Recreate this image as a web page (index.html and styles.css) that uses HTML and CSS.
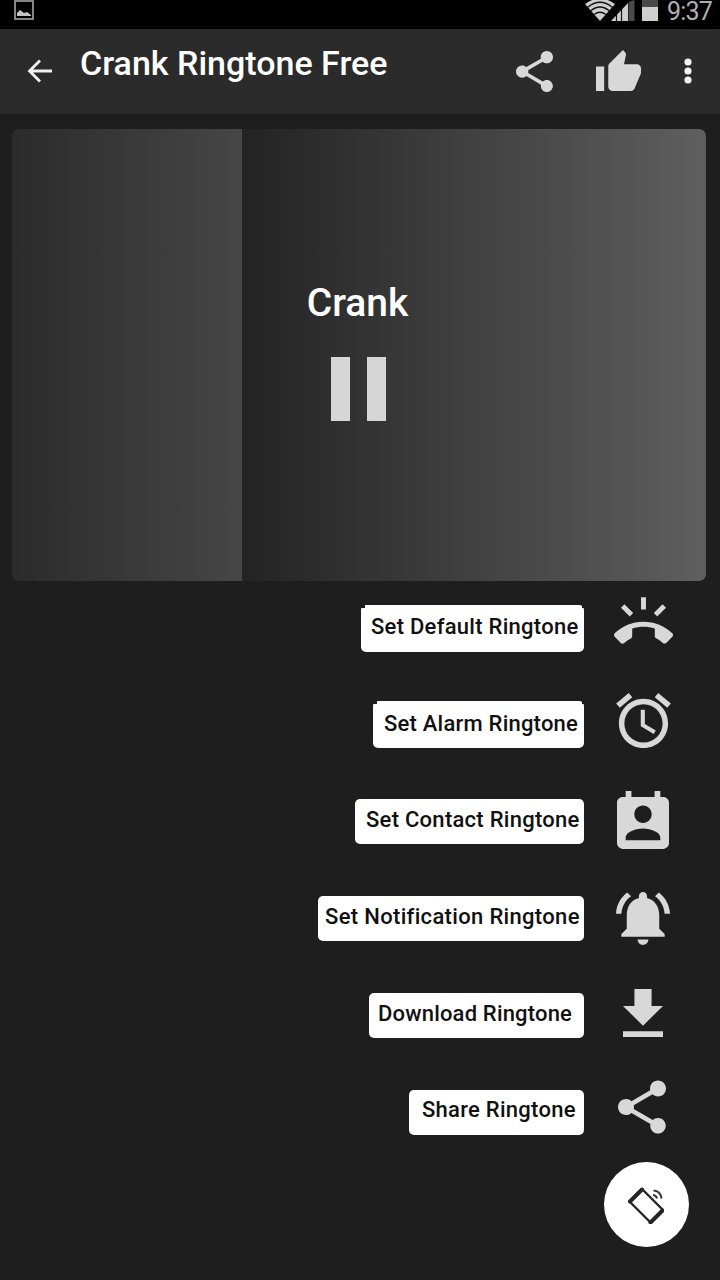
FILE: index.html
```
<!DOCTYPE html>
<html lang="en">
<head>
    <meta charset="UTF-8">
    <meta name="viewport" content="width=device-width, initial-scale=1.0">
    <title>Crank Ringtone Free</title>
    <link rel="stylesheet" href="styles.css">
</head>
<body>

    <div class="status-bar">
        <svg class="picture" viewBox="0 0 20 20" width="20" height="20">
            <rect x="1" y="1" width="18" height="18" fill="none" stroke="#a8a8a8" stroke-width="1.6"/>
            <path d="M3 16v-3l3-3 4 3 3-1 4 3v1z" fill="#c4c4c4"/>
        </svg>
        <div class="status-icons">
            <svg class="wifi" viewBox="0 0 30 21" width="30" height="21">
                <path d="M0 4Q15-7 30 4L15 21z" fill="#cdcdcd"/>
                <path d="M2.5 7.5Q15-3 27.5 7.5M5.5 11Q15 3 24.5 11M9 14.5Q15 10 21 14.5" fill="none" stroke="#111" stroke-width="1.3"/>
            </svg>
            <svg class="signal" viewBox="0 0 24 21" width="24" height="21">
                <path d="M0 21L17 3v18z" fill="#cdcdcd"/>
                <path d="M17.5 2L23.500 0v21h-6z" fill="#4a4a4a"/>
                <path d="M5.5 14v7M10.5 9v12" stroke="#111" stroke-width="1.2"/>
            </svg>
            <div class="battery"></div>
            <span class="time">9:37</span>
        </div>
    </div>

    <header class="app-bar">
        <svg class="back" viewBox="0 0 25 24" width="25" height="24">
            <path d="M13 1.5L2.5 12 13 22.5M2.5 12H25" fill="none" stroke="#f2f2f2" stroke-width="2.8"/>
        </svg>
        <h1>Crank Ringtone Free</h1>
        <svg class="share" viewBox="3 2 18 19.92" width="37" height="41">
            <path d="M18 16.08c-.76 0-1.44.3-1.96.77L8.91 12.7c.05-.23.09-.46.09-.7s-.04-.47-.09-.7l7.05-4.11c.54.5 1.25.81 2.04.81 1.66 0 3-1.34 3-3s-1.34-3-3-3-3 1.34-3 3c0 .24.04.47.09.7L8.04 9.81C7.5 9.31 6.79 9 6 9c-1.66 0-3 1.34-3 3s1.34 3 3 3c.79 0 1.5-.31 2.04-.81l7.12 4.16c-.05.21-.08.43-.08.65 0 1.61 1.31 2.92 2.92 2.92s2.92-1.31 2.92-2.92-1.31-2.92-2.92-2.92z"/>
        </svg>
        <svg class="like" viewBox="1 1 22 20" width="45" height="41">
            <path d="M1 21h4V9H1v12zm22-11c0-1.1-.9-2-2-2h-6.31l.95-4.57.03-.32c0-.41-.17-.79-.44-1.06L14.17 1 7.59 7.59C7.22 7.95 7 8.45 7 9v10c0 1.1.9 2 2 2h9c.83 0 1.54-.5 1.84-1.22l3.02-7.05c.09-.23.14-.47.14-.73v-2z"/>
        </svg>
        <svg class="more" viewBox="0 0 8 26" width="8" height="26">
            <circle cx="4" cy="4" r="3.6"/>
            <circle cx="4" cy="13" r="3.6"/>
            <circle cx="4" cy="22" r="3.6"/>
        </svg>
    </header>

    <main>
        <section class="player">
            <div class="progress"></div>
            <div class="track">
                <h2>Crank</h2>
                <div class="pause"><span></span><span></span></div>
            </div>
        </section>

        <ul class="actions">
            <li>
                <span class="label default">Set Default Ringtone</span>
                <span class="icon ring-icon">
                    <svg viewBox="0 2 24 18.9" width="59" height="47">
                        <path d="M23.71 16.67C20.66 13.78 16.54 12 12 12 7.46 12 3.34 13.78.29 16.67c-.18.18-.29.43-.29.71 0 .28.11.53.29.71l2.48 2.48c.18.18.43.29.71.29.27 0 .52-.11.7-.28.79-.74 1.69-1.36 2.66-1.85.33-.16.56-.5.56-.9v-3.1c1.45-.48 3-.73 4.6-.73s3.15.25 4.6.72v3.1c0 .39.23.74.56.9.98.49 1.87 1.12 2.67 1.85.18.18.43.28.7.28.28 0 .53-.11.71-.29l2.48-2.48c.18-.18.29-.43.29-.71s-.12-.52-.3-.7zM21.16 6.26l-1.41-1.41-3.56 3.55 1.41 1.41s3.45-3.52 3.56-3.55zM13 2h-2v5h2V2zM6.4 9.81L7.81 8.4 4.26 4.84 2.84 6.26c.11.03 3.56 3.55 3.56 3.55z"/>
                    </svg>
                </span>
            </li>
            <li>
                <span class="label alarm">Set Alarm Ringtone</span>
                <span class="icon alarm-icon">
                    <svg viewBox="2 1.86 20 20.14" width="55" height="55">
                        <path d="M22 5.72l-4.6-3.86-1.29 1.53 4.6 3.86L22 5.72zM7.88 3.39L6.6 1.86 2 5.71l1.29 1.53 4.59-3.85zM12.5 8H11v6l4.75 2.85.75-1.23-4-2.37V8zM12 4c-4.97 0-9 4.03-9 9s4.02 9 9 9c4.97 0 9-4.03 9-9s-4.03-9-9-9zm0 16c-3.87 0-7-3.13-7-7s3.13-7 7-7 7 3.13 7 7-3.13 7-7 7z"/>
                    </svg>
                </span>
            </li>
            <li>
                <span class="label contact">Set Contact Ringtone</span>
                <span class="icon contact-icon">
                    <svg viewBox="3 1 18 20" width="52" height="58">
                        <path d="M19 3h-1V1h-2v2H8V1H6v2H5c-1.11 0-2 .9-2 2v14c0 1.1.89 2 2 2h14c1.1 0 2-.9 2-2V5c0-1.1-.9-2-2-2zm-7 3c1.66 0 3 1.34 3 3s-1.34 3-3 3-3-1.34-3-3 1.34-3 3-3zm6 12H6v-1c0-2 4-3.1 6-3.1s6 1.1 6 3.1v1z"/>
                    </svg>
                </span>
            </li>
            <li>
                <span class="label notification">Set Notification Ringtone</span>
                <span class="icon">
                    <svg viewBox="2.03 2.5 19.94 19.5" width="54" height="53">
                        <path d="M7.58 4.08L6.15 2.65C3.75 4.48 2.17 7.3 2.03 10.5h2c.15-2.65 1.51-4.97 3.55-6.42zm12.39 6.42h2c-.15-3.2-1.73-6.02-4.12-7.85l-1.42 1.43c2.02 1.45 3.39 3.77 3.54 6.42zM18 11c0-3.07-1.64-5.64-4.5-6.32V4c0-.83-.67-1.5-1.5-1.5s-1.5.67-1.5 1.5v.68C7.63 5.36 6 7.92 6 11v5l-2 2v1h16v-1l-2-2v-5zm-6 11c.14 0 .27-.01.4-.04.65-.14 1.18-.58 1.44-1.18.1-.24.15-.5.15-.78h-4c.01 1.1.9 2 2.01 2z"/>
                    </svg>
                </span>
            </li>
            <li>
                <span class="label download">Download Ringtone</span>
                <span class="icon download-icon">
                    <svg viewBox="5 3 14 17" width="40" height="48" preserveAspectRatio="none">
                        <path d="M19 9h-4V3H9v6H5l7 7 7-7zM5 18v2h14v-2H5z"/>
                    </svg>
                </span>
            </li>
            <li>
                <span class="label share-label">Share Ringtone</span>
                <span class="icon share-icon">
                    <svg viewBox="3 2 18 19.92" width="48" height="54">
                        <path d="M18 16.08c-.76 0-1.44.3-1.96.77L8.91 12.7c.05-.23.09-.46.09-.7s-.04-.47-.09-.7l7.05-4.11c.54.5 1.25.81 2.04.81 1.66 0 3-1.34 3-3s-1.34-3-3-3-3 1.34-3 3c0 .24.04.47.09.7L8.04 9.81C7.5 9.31 6.79 9 6 9c-1.66 0-3 1.34-3 3s1.34 3 3 3c.79 0 1.5-.31 2.04-.81l7.12 4.16c-.05.21-.08.43-.08.65 0 1.61 1.31 2.92 2.92 2.92s2.92-1.31 2.92-2.92-1.31-2.92-2.92-2.92z"/>
                    </svg>
                </span>
            </li>
        </ul>

        <button class="fab" aria-label="Rotate">
            <svg viewBox="0 0 36 38" width="36" height="38">
                <path d="M14 3L1.5 15.5 22.500 36.500 35 24z" fill="none" stroke="#262626" stroke-width="2.4" stroke-linejoin="round"/>
                <path d="M14 3.500L2 15.500M34.500 24.500L22.500 36.500" stroke="#262626" stroke-width="4" stroke-linecap="round"/>
                <path d="M25.500 4.500Q32.500 5 33.500 12.500M25 9Q28.500 9.500 29 12.500" fill="none" stroke="#333" stroke-width="2"/>
            </svg>
        </button>
    </main>

</body>
</html>
```
FILE: styles.css
```
* {
    box-sizing: border-box;
}
body {
    font-family: Roboto, "Liberation Sans", sans-serif;
    background-color: #1e1e1e;
    color: #ffffff;
    margin: 0;
    height: 1280px;
    overflow: hidden;
}
svg {
    display: block;
    flex: none;
    fill: #d8d8d8;
}
.status-bar {
    display: flex;
    justify-content: space-between;
    height: 29px;
    padding: 0 8px 0 14px;
    background-color: #000000;
}
.status-icons {
    display: flex;
}
.signal {
    margin-left: -4px;
}
.battery {
    width: 16px;
    height: 21px;
    margin: 0 9px 0 7px;
    background: linear-gradient(#4a4a4a 7px, #cfcfcf 7px);
}
.time {
    width: 45px;
    font-size: 25px;
    line-height: 23px;
    letter-spacing: -0.8px;
    color: #b0b0b0;
}
.app-bar {
    display: flex;
    align-items: center;
    height: 85px;
    padding: 0 28px 0 27px;
    background-color: #2b2b2b;
}
.back {
    margin-bottom: 1px;
}
.app-bar h1 {
    flex: 1;
    margin: 0 0 18px 28px;
    font-size: 34px;
    font-weight: 500;
    line-height: 40px;
    white-space: nowrap;
}
.like {
    margin: 0 43px 2px;
}
.more {
    margin-bottom: 1px;
    fill: #f2f2f2;
}
.player {
    display: flex;
    position: relative;
    width: 694px;
    height: 452px;
    margin: 15px 0 0 12px;
    border-radius: 7px;
    overflow: hidden;
    background: linear-gradient(to right, #232323 230px, #5f5f5f);
}
.progress {
    width: 230px;
    background: linear-gradient(to right, #2b2b2b, #464646);
}
/* title and button lie over the progress fill */
.track {
    position: absolute;
    inset: 0;
    display: flex;
    flex-direction: column;
    align-items: center;
    padding: 150px 1px 0 0;
}
.track h2 {
    margin: 0 2px 0 0;
    font-size: 39px;
    font-weight: 500;
    line-height: 48px;
}
.pause {
    display: flex;
    gap: 17px;
    margin-top: 30px;
}
.pause span {
    width: 19px;
    height: 64px;
    background-color: #d6d6d6;
}
.actions {
    list-style: none;
    margin: 0;
    padding: 0 47px 0 0;
}
.actions li {
    display: flex;
    justify-content: flex-end;
    align-items: center;
    height: 97px;
}
.actions li:first-child {
    height: 95px;
}
.label {
    height: 45px;
    border-radius: 5px;
    background-color: #ffffff;
    color: #111111;
    font-size: 22px;
    font-weight: 500;
    line-height: 41px;
    letter-spacing: 0.27px;
    white-space: nowrap;
}
.default {
    width: 223px;
    height: 47px;
    padding-left: 10px;
    line-height: 43px;
}
.alarm {
    width: 211px;
    height: 47px;
    padding-left: 11px;
    line-height: 46px;
    letter-spacing: 0.22px;
}
/* the two top labels have squared notches in their upper corners */
.default, .alarm {
    clip-path: polygon(4px 0, calc(100% - 2px) 0, calc(100% - 2px) 3px, 100% 3px, 100% 100%, 0 100%, 0 3px, 4px 3px);
}
.contact {
    width: 229px;
    padding-left: 11px;
}
.notification {
    width: 266px;
    padding-left: 7px;
    letter-spacing: 0.33px;
}
.download {
    width: 215px;
    padding-left: 9px;
    letter-spacing: 0.18px;
}
.share-label {
    width: 175px;
    padding-left: 13px;
    line-height: 40px;
}
.icon {
    display: flex;
    justify-content: center;
    width: 60px;
    margin-left: 29px;
}
.ring-icon {
    margin-bottom: 16px;
}
.alarm-icon {
    margin-bottom: 9px;
}
.contact-icon {
    margin-bottom: 4px;
}
.download-icon {
    margin-bottom: 6px;
}
.share-icon {
    padding-right: 3px;
    margin-bottom: 11px;
}
.fab {
    display: flex;
    justify-content: center;
    align-items: center;
    width: 85px;
    height: 85px;
    margin: 1px 31px 0 auto;
    padding: 0 2px 0 0;
    border: none;
    border-radius: 50%;
    background-color: #ffffff;
}
.fab svg {
    fill: none;
}
```
